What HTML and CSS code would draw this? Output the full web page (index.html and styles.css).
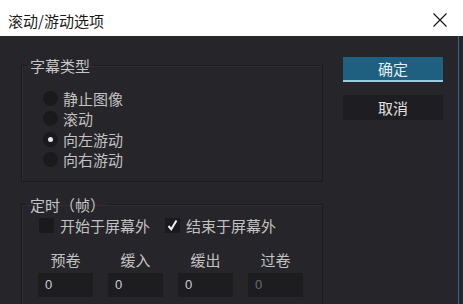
FILE: index.html
```html
<!DOCTYPE html>
<html lang="zh">
<head>
<meta charset="utf-8">
<link rel="stylesheet" href="styles.css">
</head>
<body>
<div class="window">
  <div class="titlebar">
    <span class="title">滚动/游动选项</span>
    <svg class="close" width="14" height="14" viewBox="0 0 14 14"><path d="M0.5 0.5 L13.5 13.5 M13.5 0.5 L0.5 13.5" stroke="#111" stroke-width="1.1" fill="none"/></svg>
  </div>
  <div class="body">
    <div class="left">
      <fieldset class="group g1">
        <legend>字幕类型</legend>
        <div class="radios">
          <div class="row"><span class="radio"></span><span>静止图像</span></div>
          <div class="row"><span class="radio"></span><span>滚动</span></div>
          <div class="row"><span class="radio on"></span><span>向左游动</span></div>
          <div class="row"><span class="radio"></span><span>向右游动</span></div>
        </div>
      </fieldset>
      <fieldset class="group g2">
        <legend>定时（帧）</legend>
        <div class="checks">
          <span class="check"></span><span class="clabel">开始于屏幕外</span>
          <span class="check checked"><svg width="15" height="15" viewBox="0 0 15 15"><path d="M3.5 8 L6.2 11.2 L11.5 2.5" stroke="#f2f2f2" stroke-width="2" fill="none"/></svg></span><span class="clabel">结束于屏幕外</span>
        </div>
        <div class="fields">
          <div class="field"><span class="flabel">预卷</span><span class="input">0</span></div>
          <div class="field"><span class="flabel">缓入</span><span class="input">0</span></div>
          <div class="field"><span class="flabel">缓出</span><span class="input">0</span></div>
          <div class="field"><span class="flabel">过卷</span><span class="input disabled">0</span></div>
        </div>
      </fieldset>
    </div>
    <div class="right">
      <div class="btn primary">确定</div>
      <div class="btn">取消</div>
    </div>
  </div>
</div>
</body>
</html>
```

FILE: styles.css
```css
html, body {
  margin: 0;
  padding: 0;
  width: 463px;
  height: 304px;
  overflow: hidden;
  background: #262529;
  font-family: "Noto Sans CJK SC", "Liberation Sans", sans-serif;
}
.window {
  width: 463px;
  height: 304px;
  display: flex;
  flex-direction: column;
}
.titlebar {
  height: 36px;
  flex: none;
  background: #ffffff;
  display: flex;
  align-items: center;
  justify-content: space-between;
  padding: 0 16px 0 8px;
  box-sizing: border-box;
}
.title {
  font-size: 15px;
  color: #1a1a1a;
  line-height: 15px;
  padding-top: 4px;
}
.close {
  display: block;
  margin-top: 4px;
}
.body {
  flex: 1;
  display: flex;
  gap: 20px;
  padding-left: 21px;
  border-right: 1px solid #2c6b8b;
  margin-right: 4px;
}
.left {
  width: 302px;
  display: flex;
  flex-direction: column;
  padding-top: 22px;
}
.group {
  margin: 0;
  padding: 0 0 0 5px;
  border: 1px solid #1b1a1d;
  box-shadow: inset 1px 1px 0 #2e2d31;
  min-width: 0;
  color: #c2c2c2;
  font-size: 15px;
}
.group legend {
  padding: 0 3px;
  font-size: 15px;
  line-height: 15px;
  color: #c6c6c6;
}
.g1 {
  padding-bottom: 11px;
}
.g2 {
  margin-top: 15px;
  height: 120px;
}
.radios {
  display: flex;
  flex-direction: column;
  padding-top: 15px;
  padding-left: 16px;
}
.row {
  height: 20.5px;
  display: flex;
  align-items: center;
  gap: 5px;
  font-size: 15px;
  line-height: 15px;
}
.radio {
  width: 15px;
  height: 15px;
  border-radius: 50%;
  background: #1a191c;
  display: flex;
  align-items: center;
  justify-content: center;
}
.radio.on::after {
  content: "";
  width: 5px;
  height: 5px;
  border-radius: 50%;
  background: #e8e8e8;
}
.checks {
  display: flex;
  align-items: center;
  margin-top: 5px;
  padding-left: 12px;
  height: 16px;
}
.check {
  width: 15px;
  height: 15px;
  background: #1a191c;
  display: block;
}
.check svg { display: block; }
.clabel {
  margin-left: 6px;
  margin-right: 15px;
  font-size: 15px;
  line-height: 15px;
}
.fields {
  display: grid;
  grid-template-columns: repeat(4, 55px);
  column-gap: 15px;
  margin-top: 19px;
  padding-left: 11px;
}
.field {
  display: flex;
  flex-direction: column;
  align-items: center;
  gap: 5px;
}
.flabel {
  font-size: 15px;
  line-height: 16px;
  height: 16px;
}
.input {
  width: 55px;
  height: 24px;
  background: #1d1c1f;
  font-family: "Liberation Sans", sans-serif;
  font-size: 13px;
  line-height: 24px;
  padding-left: 7px;
  box-sizing: border-box;
  color: #d0d0d0;
}
.input.disabled {
  color: #6c6c6c;
}
.right {
  display: flex;
  flex-direction: column;
  padding-top: 21px;
  gap: 13px;
}
.btn {
  width: 100px;
  height: 25px;
  box-sizing: border-box;
  background: #1e1d21;
  color: #e0e0e0;
  font-size: 15px;
  display: flex;
  align-items: center;
  justify-content: center;
  line-height: 15px;
}
.btn.primary {
  background: #1f5f7f;
  color: #e2eef4;
  border-bottom: 2px solid #9cc9dc;
}
```
